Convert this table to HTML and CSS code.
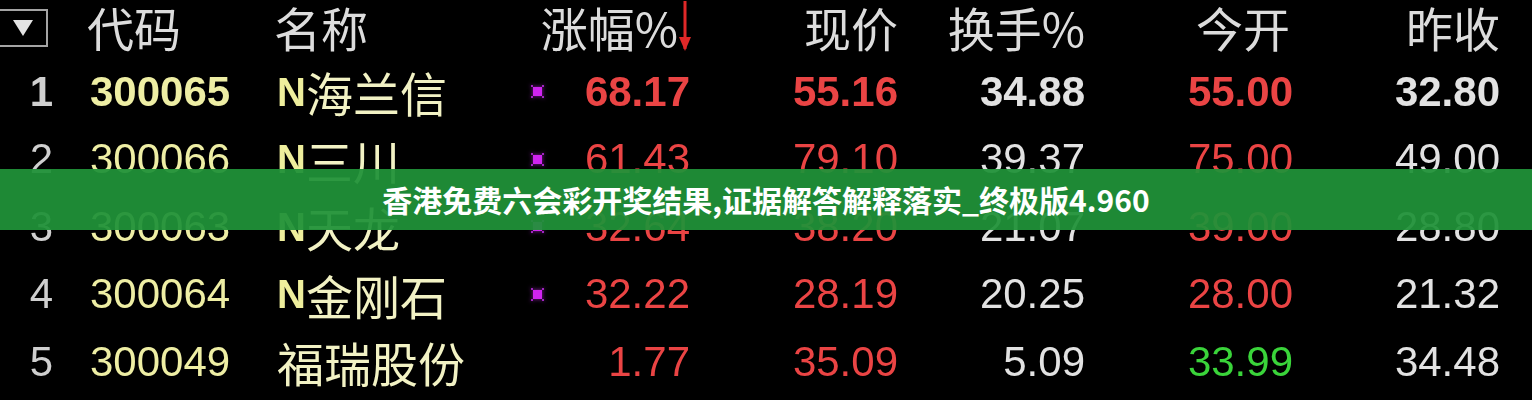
FILE: index.html
```html
<!DOCTYPE html>
<html lang="zh-CN">
<head>
<meta charset="utf-8">
<title>行情</title>
<link rel="stylesheet" href="styles.css">
</head>
<body>
<div class="board">
  <div class="grid">
    <div class="cell idx"><span class="dropbox"><svg width="22" height="18" viewBox="0 0 22 18"><polygon points="1,1 21,1 11,17" fill="#e4e4e4"/></svg></span></div>
    <div class="cell hd code-h">代码</div>
    <div class="cell hd name-h">名称</div>
    <div class="cell hd right span2">涨幅%<svg class="sortarrow" width="14" height="52" viewBox="0 0 14 52"><rect x="5.5" y="0" width="3" height="48" fill="#e02828"/><polygon points="1,36 13,36 7,50" fill="#e02828"/></svg></div>
    <div class="cell hd right">现价</div>
    <div class="cell hd right">换手%</div>
    <div class="cell hd right open-h">今开</div>
    <div class="cell hd right">昨收</div>

    <div class="cell idx num b">1</div>
    <div class="cell code num b">300065</div>
    <div class="cell name"><span class="n b">N</span>海兰信</div>
    <div class="cell mk"><svg width="15" height="15" viewBox="0 0 15 15"><rect x="3" y="3" width="9" height="9" fill="#d024f0"/><rect x="1" y="1" width="2" height="2" fill="#a024c0"/><rect x="12" y="1" width="2" height="2" fill="#a024c0"/><rect x="1" y="12" width="2" height="2" fill="#a024c0"/><rect x="12" y="12" width="2" height="2" fill="#a024c0"/></svg></div>
    <div class="cell num red b">68.17</div>
    <div class="cell num red b">55.16</div>
    <div class="cell num wht b">34.88</div>
    <div class="cell num red b">55.00</div>
    <div class="cell num wht b">32.80</div>

    <div class="cell idx num">2</div>
    <div class="cell code num">300066</div>
    <div class="cell name"><span class="n b">N</span>三川</div>
    <div class="cell mk"><svg width="15" height="15" viewBox="0 0 15 15"><rect x="3" y="3" width="9" height="9" fill="#d024f0"/><rect x="1" y="1" width="2" height="2" fill="#a024c0"/><rect x="12" y="1" width="2" height="2" fill="#a024c0"/><rect x="1" y="12" width="2" height="2" fill="#a024c0"/><rect x="12" y="12" width="2" height="2" fill="#a024c0"/></svg></div>
    <div class="cell num red">61.43</div>
    <div class="cell num red">79.10</div>
    <div class="cell num wht">39.37</div>
    <div class="cell num red">75.00</div>
    <div class="cell num wht">49.00</div>

    <div class="cell idx num">3</div>
    <div class="cell code num">300063</div>
    <div class="cell name"><span class="n b">N</span>天龙</div>
    <div class="cell mk"><svg width="15" height="15" viewBox="0 0 15 15"><rect x="3" y="3" width="9" height="9" fill="#d024f0"/><rect x="1" y="1" width="2" height="2" fill="#a024c0"/><rect x="12" y="1" width="2" height="2" fill="#a024c0"/><rect x="1" y="12" width="2" height="2" fill="#a024c0"/><rect x="12" y="12" width="2" height="2" fill="#a024c0"/></svg></div>
    <div class="cell num red">32.64</div>
    <div class="cell num red">38.20</div>
    <div class="cell num wht">21.07</div>
    <div class="cell num red">39.00</div>
    <div class="cell num wht">28.80</div>

    <div class="cell idx num">4</div>
    <div class="cell code num">300064</div>
    <div class="cell name"><span class="n b">N</span>金刚石</div>
    <div class="cell mk"><svg width="15" height="15" viewBox="0 0 15 15"><rect x="3" y="3" width="9" height="9" fill="#d024f0"/><rect x="1" y="1" width="2" height="2" fill="#a024c0"/><rect x="12" y="1" width="2" height="2" fill="#a024c0"/><rect x="1" y="12" width="2" height="2" fill="#a024c0"/><rect x="12" y="12" width="2" height="2" fill="#a024c0"/></svg></div>
    <div class="cell num red">32.22</div>
    <div class="cell num red">28.19</div>
    <div class="cell num wht">20.25</div>
    <div class="cell num red">28.00</div>
    <div class="cell num wht">21.32</div>

    <div class="cell idx num">5</div>
    <div class="cell code num">300049</div>
    <div class="cell name">福瑞股份</div>
    <div class="cell mk"></div>
    <div class="cell num red">1.77</div>
    <div class="cell num red">35.09</div>
    <div class="cell num wht">5.09</div>
    <div class="cell num grn">33.99</div>
    <div class="cell num wht">34.48</div>
  </div>
  <div class="banner">香港免费六会彩开奖结果,证据解答解释落实_终极版4.960</div>
</div>
</body>
</html>
```

FILE: styles.css
```css
html, body {
  margin: 0;
  padding: 0;
  background: #000;
}

.board {
  position: relative;
  width: 1532px;
  height: 400px;
  overflow: hidden;
  background: #000;
}

.grid {
  display: grid;
  grid-template-columns: 57px 203px 250px 50px 130px 208px 187px 208px 207px;
  grid-template-rows: 58px repeat(5, 67.5px);
  align-items: center;
}

.cell {
  display: flex;
  align-items: center;
  white-space: nowrap;
  filter: blur(0.5px);
}

.hd {
  font-family: "Noto Sans CJK SC", sans-serif;
  font-weight: 400;
  font-size: 47px;
  color: #dcdcdc;
  line-height: 1.1;
  margin-bottom: 4px;
}

.right {
  justify-content: flex-end;
}

.span2 {
  grid-column: span 2;
}

.code-h {
  padding-left: 30px;
}

.name-h {
  padding-left: 14px;
}

.open-h {
  padding-right: 3px;
}

.sortarrow {
  margin-right: -2px;
}

.dropbox {
  display: flex;
  align-items: center;
  justify-content: center;
  width: 46px;
  height: 34px;
  margin-top: -2px;
  border: 2px solid #a4a4a4;
  border-left: none;
}

.num {
  font-family: "Liberation Sans", Arial, sans-serif;
  font-size: 42px;
  font-weight: 400;
  line-height: 1.2;
  justify-content: flex-end;
}

.b {
  font-weight: 700;
}

.idx.num {
  color: #cfcfcf;
  padding-right: 4px;
}

.grid > .idx:first-child {
  justify-content: flex-start;
}

.code.num {
  justify-content: flex-start;
  padding-left: 33px;
  color: #eeeea4;
}

.name {
  padding-left: 17px;
  font-family: "Noto Sans CJK SC", sans-serif;
  font-size: 47px;
  line-height: 1.3;
  color: #f2f2c4;
}

.name .n {
  font-family: "Liberation Sans", Arial, sans-serif;
  font-size: 40px;
  color: #eeee9c;
}

.mk {
  justify-content: center;
  padding-left: 4px;
  filter: drop-shadow(0 0 2px rgba(200, 40, 240, 0.7));
}

.red {
  color: #ea4444;
}

.wht {
  color: #e2e2e2;
}

.grn {
  color: #3ad43a;
}

.banner {
  position: absolute;
  left: 0;
  right: 0;
  top: 169px;
  height: 61px;
  display: flex;
  align-items: center;
  justify-content: center;
  background: rgba(32, 146, 56, 0.94);
  color: #fff;
  font-family: "Noto Sans CJK SC", sans-serif;
  font-weight: 700;
  font-size: 30px;
  line-height: 1.2;
  padding-bottom: 1px;
  box-sizing: border-box;
}
```
